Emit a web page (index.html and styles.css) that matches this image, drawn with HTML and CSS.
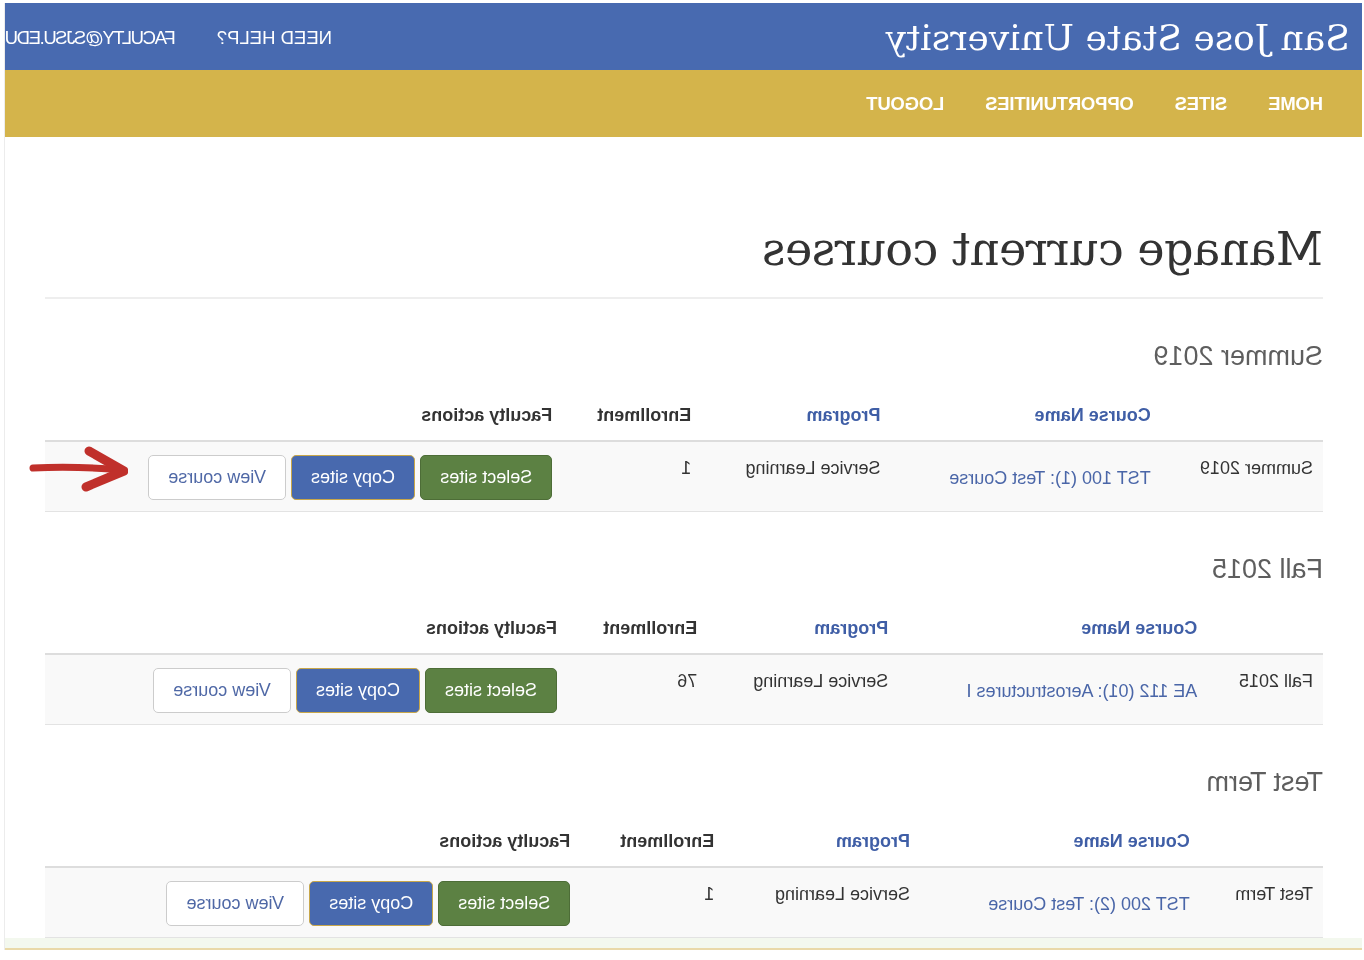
FILE: index.html
```html
<!DOCTYPE html>
<html lang="en">
<head>
<meta charset="utf-8">
<title>Manage current courses</title>
<link rel="stylesheet" href="styles.css">
</head>
<body>
<div class="page">
  <div class="frame">
    <header class="topbar">
      <div class="brand">San Jose State University</div>
      <div class="toplinks">
        <span>NEED HELP?</span>
        <span class="email">FACULTY@SJSU.EDU</span>
      </div>
    </header>
    <nav class="mainnav">
      <span>HOME</span>
      <span>SITES</span>
      <span>OPPORTUNITIES</span>
      <span>LOGOUT</span>
    </nav>
    <main class="content">
      <div class="page-header"><h1>Manage current courses</h1></div>

      <section class="term">
        <h2>Summer 2019</h2>
        <table class="courses">
          <thead><tr><th></th><th><a class="sort">Course Name</a></th><th><a class="sort">Program</a></th><th>Enrollment</th><th>Faculty actions</th></tr></thead>
          <tbody><tr>
            <td>Summer 2019</td>
            <td class="course"><a class="link">TST 100 (1): Test Course</a></td>
            <td>Service Learning</td>
            <td>1</td>
            <td class="actions"><button class="btn btn-green">Select sites</button> <button class="btn btn-blue">Copy sites</button> <button class="btn btn-white">View course</button></td>
          </tr></tbody>
        </table>
      </section>

      <section class="term">
        <h2>Fall 2015</h2>
        <table class="courses">
          <thead><tr><th></th><th><a class="sort">Course Name</a></th><th><a class="sort">Program</a></th><th>Enrollment</th><th>Faculty actions</th></tr></thead>
          <tbody><tr>
            <td>Fall 2015</td>
            <td class="course"><a class="link">AE 112 (01): Aerostructures I</a></td>
            <td>Service Learning</td>
            <td>76</td>
            <td class="actions"><button class="btn btn-green">Select sites</button> <button class="btn btn-blue">Copy sites</button> <button class="btn btn-white">View course</button></td>
          </tr></tbody>
        </table>
      </section>

      <section class="term">
        <h2>Test Term</h2>
        <table class="courses">
          <thead><tr><th></th><th><a class="sort">Course Name</a></th><th><a class="sort">Program</a></th><th>Enrollment</th><th>Faculty actions</th></tr></thead>
          <tbody><tr>
            <td>Test Term</td>
            <td class="course"><a class="link">TST 200 (2): Test Course</a></td>
            <td>Service Learning</td>
            <td>1</td>
            <td class="actions"><button class="btn btn-green">Select sites</button> <button class="btn btn-blue">Copy sites</button> <button class="btn btn-white">View course</button></td>
          </tr></tbody>
        </table>
      </section>
    </main>
    <div class="strip"></div>

    <svg class="arrow" viewBox="0 0 100 50" width="100" height="50" aria-hidden="true">
      <path d="M95 22 Q50 20 8 24" fill="none" stroke="#c0302b" stroke-width="7" stroke-linecap="round"/>
      <path d="M39 5 L4 25 L42 41" fill="none" stroke="#c0302b" stroke-width="9" stroke-linecap="round" stroke-linejoin="round"/>
    </svg>
  </div>
</div>
</body>
</html>
```

FILE: styles.css
```css
html, body {
  margin: 0;
  padding: 0;
  background: #ffffff;
}

.page {
  width: 1364px;
  height: 960px;
  overflow: hidden;
  transform: scaleX(-1);
  font-family: "Liberation Sans", Arial, sans-serif;
  color: #333333;
}

.frame {
  position: relative;
  margin: 3px 0 0 2px;
  width: 1357px;
  border-right: 1px solid #ececec;
}

.topbar {
  height: 67px;
  background: #486ab0;
  display: flex;
  align-items: center;
  padding-left: 12px;
  overflow: hidden;
  color: #ffffff;
}

.brand {
  flex: none;
  font-family: "DejaVu Serif", serif;
  font-size: 36px;
  line-height: 44px;
  padding-top: 2px;
}

.toplinks {
  flex: none;
  margin-left: auto;
  width: 327px;
  display: flex;
  gap: 41px;
  white-space: nowrap;
  font-size: 18.5px;
  padding-top: 2px;
}

.email {
  letter-spacing: -1.4px;
}

.mainnav {
  height: 67px;
  background: #d4b44b;
  display: flex;
  align-items: center;
  gap: 41px;
  padding-left: 39px;
  color: #ffffff;
  font-size: 18.5px;
  font-weight: bold;
  letter-spacing: -0.2px;
}

.content {
  padding: 0 40px 0 39px;
}

.page-header {
  padding-top: 84px;
  padding-bottom: 20px;
  border-bottom: 2px solid #eeeeee;
}

h1 {
  margin: 0;
  font-family: "DejaVu Serif", serif;
  font-weight: normal;
  font-size: 46px;
  line-height: 56px;
  letter-spacing: -0.5px;
  color: #333333;
}

h2 {
  margin: 41px 0 20px;
  font-size: 27px;
  line-height: 32px;
  font-weight: normal;
  color: #5e5e5e;
}

.courses {
  width: 100%;
  border-collapse: collapse;
  font-size: 18px;
  line-height: 26px;
}

.courses th {
  text-align: left;
  padding: 10px 10px 12px;
  border-bottom: 2px solid #dddddd;
  vertical-align: bottom;
  font-weight: bold;
  color: #333333;
}

.courses td {
  background: #f9f9f9;
  padding: 13px 10px 11px;
  border-bottom: 1px solid #e3e3e3;
  vertical-align: top;
}

.courses td.course {
  padding-top: 23px;
}

.sort {
  color: #3f5ea6;
}

.link {
  color: #4a66a8;
}

.actions {
  white-space: nowrap;
}

.btn {
  font-family: "Liberation Sans", Arial, sans-serif;
  font-size: 18px;
  line-height: 25px;
  padding: 9px 19px;
  border: 1px solid transparent;
  border-radius: 5px;
  color: #ffffff;
}

.btn-green {
  background: #5c8143;
  border-color: #4d6d37;
}

.btn-blue {
  background: #4869ae;
  border-color: #c8a74a;
}

.btn-white {
  background: #ffffff;
  border-color: #cccccc;
  color: #4f68a6;
}

.strip {
  height: 10px;
  background: #f3f8ee;
  border-bottom: 2px solid #e9d9a8;
}

.arrow {
  position: absolute;
  left: 1234px;
  top: 443px;
}
```
